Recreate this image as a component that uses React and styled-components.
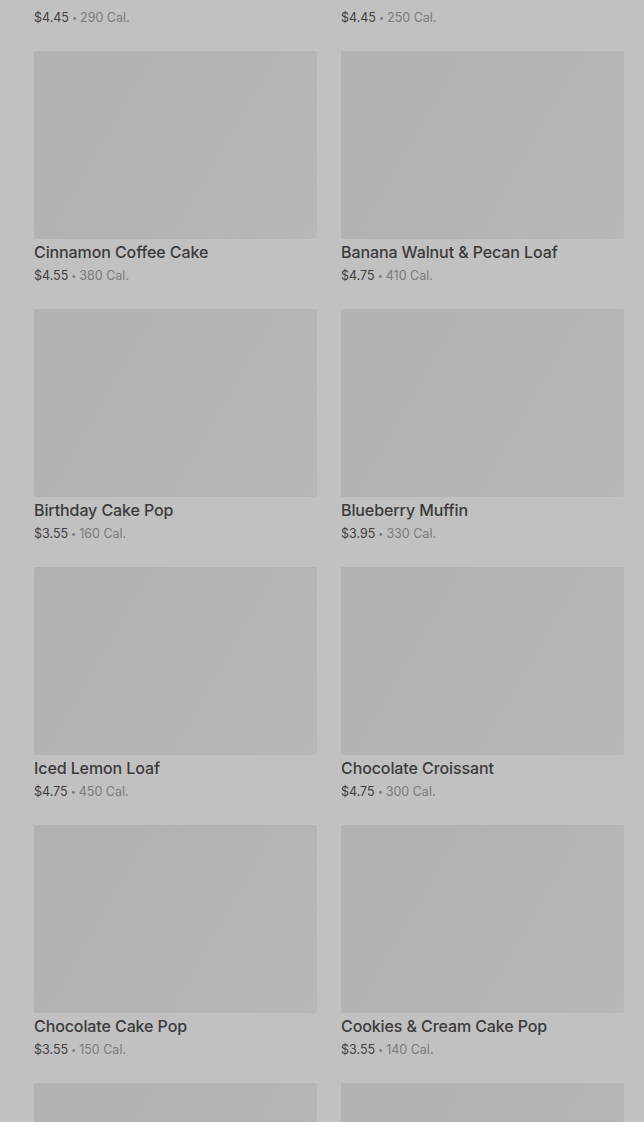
import styled, { createGlobalStyle } from "styled-components";

const items = [
    { name: "Cheese Danish", price: "$4.45", cal: "290 Cal." },
    { name: "Butter Croissant", price: "$4.45", cal: "250 Cal." },
    { name: "Cinnamon Coffee Cake", price: "$4.55", cal: "380 Cal." },
    { name: "Banana Walnut & Pecan Loaf", price: "$4.75", cal: "410 Cal." },
    { name: "Birthday Cake Pop", price: "$3.55", cal: "160 Cal." },
    { name: "Blueberry Muffin", price: "$3.95", cal: "330 Cal." },
    { name: "Iced Lemon Loaf", price: "$4.75", cal: "450 Cal." },
    { name: "Chocolate Croissant", price: "$4.75", cal: "300 Cal." },
    { name: "Chocolate Cake Pop", price: "$3.55", cal: "150 Cal." },
    { name: "Cookies & Cream Cake Pop", price: "$3.55", cal: "140 Cal." },
    { name: "Double Chocolate Brownie", price: "$3.95", cal: "480 Cal." },
    { name: "Plain Bagel", price: "$2.45", cal: "280 Cal." },
];

const GlobalStyle = createGlobalStyle`
    html, body {
        margin: 0;
        padding: 0;
        background: #c1c1c1;
    }
    body {
        font-family: Inter, "Open Sans", Roboto, sans-serif;
    }
`;

const Viewport = styled.main`
    height: 1122px;
    overflow: hidden;
    background: #c1c1c1;
`;

// the list is scrolled: first row sits partly above the fold
const Grid = styled.section`
    display: grid;
    grid-template-columns: 283px 283px;
    column-gap: 24px;
    row-gap: 23px;
    padding: 0 20px 0 34px;
    margin-top: -207px;
`;

const Card = styled.article`
    display: flex;
    flex-direction: column;
`;

const Thumb = styled.div`
    height: 188px;
    border-radius: 2px;
    background: linear-gradient(120deg, #b2b2b2 0%, #b3b3b3 55%, #b8b8b8 100%);
    margin-bottom: 2px;
`;

const Name = styled.h3`
    margin: 0;
    font-size: 16px;
    line-height: 22px;
    font-weight: 500;
    color: #3b3b3b;
    letter-spacing: -0.1px;
`;

const Meta = styled.p`
    margin: 3px 0 0;
    font-size: 12.5px;
    line-height: 20px;
    color: #7a7a7a;
`;

const Price = styled.span`
    color: #404040;
`;

const Dot = styled.span`
    font-size: 9px;
    vertical-align: 1px;
    margin: 0 3px;
`;

const App = () => {
    return (
        <Viewport>
            <GlobalStyle />
            <Grid>
                {items.map((item) => (
                    <Card key={item.name}>
                        <Thumb />
                        <Name>{item.name}</Name>
                        <Meta>
                            <Price>{item.price}</Price>
                            <Dot>•</Dot>
                            {item.cal}
                        </Meta>
                    </Card>
                ))}
            </Grid>
        </Viewport>
    );
};

export default App;
